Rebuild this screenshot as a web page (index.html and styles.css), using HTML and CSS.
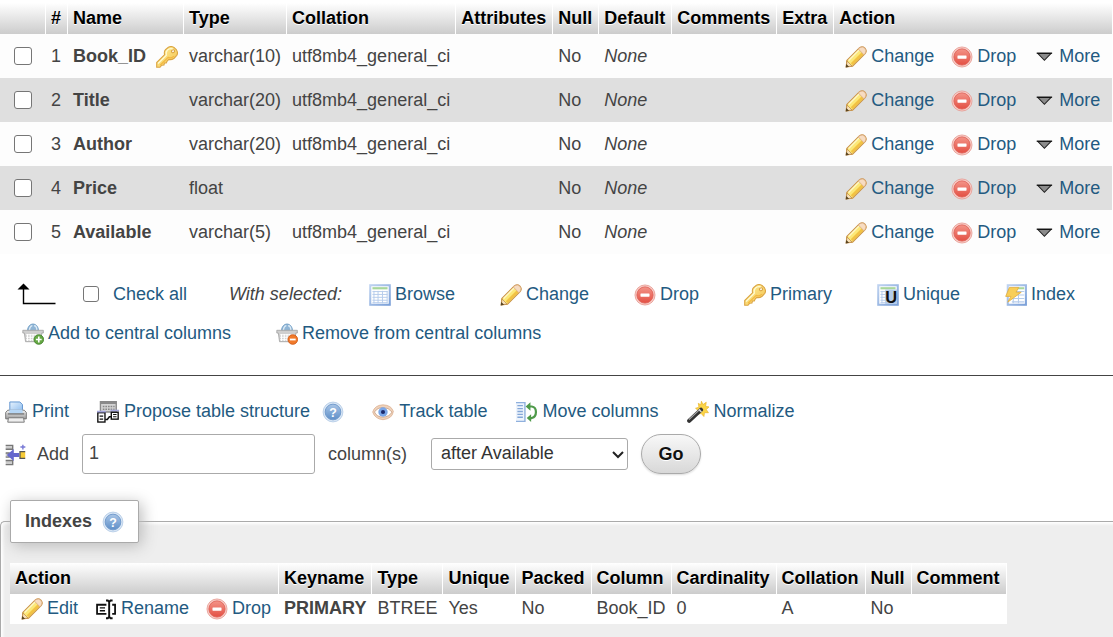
FILE: index.html
```
<!DOCTYPE html>
<html lang="en">
<head>
<meta charset="utf-8">
<title>Table structure</title>
<link rel="stylesheet" href="styles.css">
</head>
<body>
<svg class="sprite" width="0" height="0" aria-hidden="true">
  <defs>
    <linearGradient id="g-gold" x1="0" y1="0" x2="1" y2="1"><stop offset="0" stop-color="#fff3a0"/><stop offset="1" stop-color="#f3bf4a"/></linearGradient>
    <linearGradient id="g-red" x1="0" y1="0" x2="0" y2="1"><stop offset="0" stop-color="#f39488"/><stop offset="1" stop-color="#e34f43"/></linearGradient>
    <linearGradient id="g-blue" x1="0" y1="0" x2="0" y2="1"><stop offset="0" stop-color="#a9c5e6"/><stop offset="1" stop-color="#5f8fc8"/></linearGradient>
    <linearGradient id="g-paper" x1="0" y1="0" x2="1" y2="1"><stop offset="0" stop-color="#e6f2fd"/><stop offset="1" stop-color="#8cbcee"/></linearGradient>
    <linearGradient id="g-grey" x1="0" y1="0" x2="0" y2="1"><stop offset="0" stop-color="#f4f4f4"/><stop offset="1" stop-color="#9a9a9a"/></linearGradient>
    <linearGradient id="g-frame" x1="0" y1="0" x2="1" y2="1"><stop offset="0" stop-color="#bfd3f0"/><stop offset="1" stop-color="#7ba0d8"/></linearGradient>
  </defs>
  <symbol id="pencil" viewBox="0 0 16 16">
    <path d="M.9 15.2 1.3 10.6 10.6 1.3Q12.6-.1 14.5 1.5 16.2 3.5 14.8 5.4L5.5 14.7Z" fill="#fce878" stroke="#c9924a" stroke-width=".8"/>
    <path d="M4.900 13.2 13.6 4.5" stroke="#f2c243" stroke-width="2"/>
    <path d="M2.600 10.5 10.7 2.4" stroke="#fff8c4" stroke-width="1.1"/>
    <path d="M9.700 2.200 10.8 1.2Q12.7.1 14.4 1.600 15.900 3.400 14.7 5.300L13.7 6.300Z" fill="#f7dcc2" stroke="#dcae84" stroke-width=".6"/>
    <path d="M.9 15.2 1.500 11 5.1 14.500Z" fill="#f8e2ba" stroke="#b98642" stroke-width=".5"/>
    <path d="M.5 15.6 .9 13 3 15.1Z" fill="#5a4522"/>
  </symbol>
  <symbol id="drop" viewBox="0 0 16 16">
    <circle cx="8" cy="8" r="7.3" fill="#f8cdc7" stroke="#e79a92" stroke-width=".6"/>
    <circle cx="8" cy="8" r="5.9" fill="url(#g-red)" stroke="#de5f55" stroke-width=".6"/>
    <rect x="4.7" y="6.9" width="6.6" height="2.3" rx=".4" fill="#fff"/>
  </symbol>
  <symbol id="more" viewBox="0 0 16 16">
    <path d="M3.6 5.5H13L8.3 10.4Z" fill="#8b8b8b" stroke="#222" stroke-width=".8"/>
    <path d="M2.7 5.2H13.9" stroke="#111" stroke-width=".9"/>
  </symbol>
  <symbol id="key" viewBox="0 0 16 16">
    <path fill-rule="evenodd" d="M9 .9Q11.4-.3 13.4 1.3L14.8 2.7Q16.3 4.900 15.1 6.8L13.2 8.9Q11.300 10.3 9.300 9.800L8.100 11 7.500 12.3 6.100 12.4 5.8 13.8 4.2 14 2.9 15.5H.5V12L6.3 6.300Q5.600 4.100 6.900 2.700ZM11.7 3.1A1 1 0 1 0 13.1 4.5 1 1 0 1 0 11.7 3.1Z" fill="url(#g-gold)" stroke="#dba544" stroke-width=".8"/>
    <path d="M1.500 12.700 7.500 6.700Q7 4.200 8.300 2.900 10 1.300 12.200 2.100" fill="none" stroke="#fffbd2" stroke-width=".9"/>
    <path d="M3 14 8.800 8.300Q11 9.300 13 7.400" fill="none" stroke="#f3b840" stroke-width=".9"/>
  </symbol>
  <symbol id="grid" viewBox="0 0 16 16">
    <rect x=".9" y=".9" width="14.2" height="14.2" fill="#fff" stroke="url(#g-frame)" stroke-width="1.5"/>
    <path d="M2.5 3.1H13.5" stroke="#a7d69b" stroke-width="1.6"/>
    <path d="M2.5 5.5H13.5M2.5 7.6H13.5M2.5 9.7H13.5M2.5 11.8H13.5M2.5 13.6H13.5M3.6 5V14M6.6 5V14M9.8 5V14M13.2 5V14" stroke="#b6cceb" stroke-width=".7"/>
  </symbol>
  <symbol id="index" viewBox="0 0 16 16">
    <rect x="2" y=".9" width="13.2" height="14.2" fill="#fff" stroke="url(#g-frame)" stroke-width="1.5"/>
    <path d="M9 3.1H14" stroke="#a7d69b" stroke-width="1.5"/>
    <path d="M8 5.5H14M8 8H14M5 10.5H14M5 13H14M9.8 5V14M6 10V14" stroke="#b6cceb" stroke-width=".8"/>
    <path d="M3.2 2.5H10L8 6H11.8L2 13.2 4.3 9H.5Z" fill="#f8ce58" stroke="#e1ac3e" stroke-width=".6"/>
  </symbol>
  <symbol id="basket" viewBox="0 0 16 16">
    <path d="M4 5.5A4 4.8 0 0 1 12 5.500Z" fill="#8fb5d6" stroke="#6999c2" stroke-width=".6"/>
    <path d="M5.4 5.5A2 3.5 0 0 1 7.500 2M8.800 2A2 3.5 0 0 1 10.8 5.500" fill="none" stroke="#dceaf5"/>
    <path d="M.6 5.3H15.5V7.3H14.4L13.7 13.6H2.6L1.7 7.3H.6Z" fill="#cfcfcf" stroke="#a2a2a2" stroke-width=".6"/>
    <path d="M3 8.5H13.5M3 10.4H13.4M3 12.2H13M4 8V13M6 8V13M8 8V13M10 8V13M12 8V13" stroke="#fff" stroke-width=".8"/>
  </symbol>
  <symbol id="basket-add" viewBox="0 0 16 16">
    <use href="#basket" width="16" height="16"/>
    <circle cx="12.2" cy="12" r="3.5" fill="#65a843" stroke="#3e7d28" stroke-width=".6"/>
    <path d="M12.2 9.900V14.1M10.1 12H14.300" stroke="#fff" stroke-width="1.2"/>
  </symbol>
  <symbol id="basket-remove" viewBox="0 0 16 16">
    <use href="#basket" width="16" height="16"/>
    <circle cx="12.2" cy="12" r="3.5" fill="#f17a2a" stroke="#cc5411" stroke-width=".6"/>
    <path d="M10.1 12H14.300" stroke="#fff" stroke-width="1.3"/>
  </symbol>
  <symbol id="print" viewBox="0 0 16 16">
    <path d="M3.5 8V.7H10.8L12.7 2.6V8Z" fill="url(#g-paper)" stroke="#5f93cf" stroke-width=".7"/>
    <path d="M2 6.7H14L15.5 8.3V13H.5V8.3Z" fill="url(#g-grey)" stroke="#777" stroke-width=".7"/>
    <path d="M3.2 6.2H12.8V9H3.2Z" fill="#b5d6f5"/>
    <path d="M2 9.4H14" stroke="#555" stroke-width=".7"/>
    <path d="M2.5 12.2H13.5L14 15.4H2Z" fill="#eee" stroke="#777" stroke-width=".7"/>
  </symbol>
  <symbol id="propose" viewBox="0 0 16 16">
    <path d="M2.5.5H14V8H2.5Z" fill="#d4d4d4" stroke="#8a8a8a"/>
    <path d="M2.5 1.3H14" stroke="#8a8a8a" stroke-width="1.8"/>
    <path d="M4.2 4H12.8M4.2 6H12.8" stroke="#888" stroke-dasharray="1.2 .7"/>
    <rect x=".6" y="8.500" width="5.2" height="6.8" fill="#fff" stroke="#111"/>
    <path d="M0 7.700H6.400M9.800 7H16" stroke="#a5a6dc" stroke-width="1.4"/>
    <rect x="10.4" y="8.200" width="5" height="5" fill="#fff" stroke="#111"/>
    <path d="M1.900 11H4.500M1.900 13.2H4.500M11.700 9.800H14.2M11.700 11.500H14.2" stroke="#111" stroke-width=".8"/>
    <path d="M6 13.500H7.500L9 11.500H10.400" fill="none" stroke="#111" stroke-width="1.1"/>
  </symbol>
  <symbol id="help" viewBox="0 0 16 16">
    <circle cx="8" cy="8" r="7.2" fill="#d9e6f5" stroke="#b9cfe8" stroke-width=".7"/>
    <circle cx="8" cy="8" r="5.7" fill="url(#g-blue)" stroke="#6f99cb" stroke-width=".7"/>
  </symbol>
  <symbol id="eye" viewBox="0 0 16 16">
    <path d="M.5 8Q2 3 8 2.8 14 3 15.5 7.500 15 12.8 8 13.600 2 13 .5 8Z" fill="#efd2bb" stroke="#ddb294" stroke-width=".6"/>
    <path d="M1.800 8Q4 4.700 8 4.700T14.600 8Q12.500 11.600 8 11.700T1.800 8Z" fill="#fff" stroke="#c9a287" stroke-width=".6"/>
    <circle cx="8" cy="8" r="3.400" fill="#7aa6e8"/><circle cx="8" cy="8" r="1.500" fill="#1b2a6c"/>
  </symbol>
  <symbol id="move" viewBox="0 0 16 16">
    <path d="M0 1.2H6.5V14.8H0" fill="#eef4fc" stroke="#8fb0dd"/>
    <path d="M1 3.4H5M1 5.5H5M1 7.6H5M1 9.7H5M1 11.8H5" stroke="#84a7d8"/>
    <path d="M9 4H11.5Q14.5 4.4 14.5 8T11.5 12.4H10.5" fill="none" stroke="#4f9a4a" stroke-width="1.6"/>
    <path d="M7 4 10.5.9V7ZM7.8 12.4 11 9.7V15.2Z" fill="#4f9a4a"/>
  </symbol>
  <symbol id="wand" viewBox="0 0 16 16">
    <path d="M10.5.2 11.6 2.6 14 .9 13.5 3.8 16 4.3 14 6.2 15.6 8.5 12.7 8.5 12.3 11.3 10.3 9.1 7.8 9.5 8.3 7 6.2 5.3 8.7 4.5 8.2 1.7 10 2.8Z" fill="#fbd548" stroke="#e9b52b" stroke-width=".5"/>
    <path d="M1.6 14.4 10.2 6.4" stroke="#333" stroke-width="3" stroke-linecap="round"/>
    <path d="M1.4 13.5 9.5 5.9" stroke="#aaa" stroke-width=".8"/>
    <path d="M8.7 6.2 10.5 8" stroke="#ddd"/>
  </symbol>
  <symbol id="add-column" viewBox="0 0 16 16">
    <path d="M.5 1H5.600V3.800H.5M.5 12H5.600V15H.5M.5 6.500H3V9.500H.5" fill="#ccc" stroke="#777" stroke-width="1"/>
    <path d="M1.300 8 6.400 3.700V6.500H10.300V9.500H6.400V12.300Z" fill="#6668cd"/>
    <path d="M14.7 5.600H10.900V10.400H14.700Z" fill="#f7cb36"/>
    <path d="M14.700 5.600H10.900V10.400H14.700" fill="none" stroke="#555" stroke-width=".9"/>
    <path d="M13 .5V4M11.200 2.200H14.800" stroke="#7778d5" stroke-width="1"/>
  </symbol>
  <symbol id="rename" viewBox="0 0 16 16">
    <path d="M8.300 4.900H1.500V11.600H8.300M12.500 4.900H14.600V11.600H12.500" fill="none" stroke="#111" stroke-width="1.300"/>
    <path d="M3.500 7.200H7.300M3.500 9.300H7.300" stroke="#111"/>
    <path d="M8 1.800H9.300L10.300 2.800 11.300 1.800H12.800M10.300 2.800V13.700M8 14.700H9.300L10.300 13.700 11.300 14.700H12.800" fill="none" stroke="#111" stroke-width="1.400"/>
  </symbol>
</svg>

<main class="page">
  <form class="structure">
    <table class="data columns">
      <thead>
        <tr><th></th><th>#</th><th>Name</th><th>Type</th><th>Collation</th><th>Attributes</th><th>Null</th><th>Default</th><th>Comments</th><th>Extra</th><th class="wide">Action</th></tr>
      </thead>
      <tbody>
        <tr>
          <td class="tick"><input type="checkbox" class="check" aria-label="Select Book_ID"></td><td>1</td>
          <th scope="row"><span class="name">Book_ID <svg class="icon"><use href="#key"/></svg></span></th>
          <td>varchar(10)</td><td>utf8mb4_general_ci</td><td></td><td>No</td><td><i>None</i></td><td></td><td></td>
          <td><div class="actions"><a class="link" href="#"><svg class="icon"><use href="#pencil"/></svg>Change</a><a class="link" href="#"><svg class="icon"><use href="#drop"/></svg>Drop</a><a class="link" href="#"><svg class="icon"><use href="#more"/></svg>More</a></div></td>
        </tr>
        <tr>
          <td class="tick"><input type="checkbox" class="check" aria-label="Select Title"></td><td>2</td>
          <th scope="row">Title</th>
          <td>varchar(20)</td><td>utf8mb4_general_ci</td><td></td><td>No</td><td><i>None</i></td><td></td><td></td>
          <td><div class="actions"><a class="link" href="#"><svg class="icon"><use href="#pencil"/></svg>Change</a><a class="link" href="#"><svg class="icon"><use href="#drop"/></svg>Drop</a><a class="link" href="#"><svg class="icon"><use href="#more"/></svg>More</a></div></td>
        </tr>
        <tr>
          <td class="tick"><input type="checkbox" class="check" aria-label="Select Author"></td><td>3</td>
          <th scope="row">Author</th>
          <td>varchar(20)</td><td>utf8mb4_general_ci</td><td></td><td>No</td><td><i>None</i></td><td></td><td></td>
          <td><div class="actions"><a class="link" href="#"><svg class="icon"><use href="#pencil"/></svg>Change</a><a class="link" href="#"><svg class="icon"><use href="#drop"/></svg>Drop</a><a class="link" href="#"><svg class="icon"><use href="#more"/></svg>More</a></div></td>
        </tr>
        <tr>
          <td class="tick"><input type="checkbox" class="check" aria-label="Select Price"></td><td>4</td>
          <th scope="row">Price</th>
          <td>float</td><td></td><td></td><td>No</td><td><i>None</i></td><td></td><td></td>
          <td><div class="actions"><a class="link" href="#"><svg class="icon"><use href="#pencil"/></svg>Change</a><a class="link" href="#"><svg class="icon"><use href="#drop"/></svg>Drop</a><a class="link" href="#"><svg class="icon"><use href="#more"/></svg>More</a></div></td>
        </tr>
        <tr>
          <td class="tick"><input type="checkbox" class="check" aria-label="Select Available"></td><td>5</td>
          <th scope="row">Available</th>
          <td>varchar(5)</td><td>utf8mb4_general_ci</td><td></td><td>No</td><td><i>None</i></td><td></td><td></td>
          <td><div class="actions"><a class="link" href="#"><svg class="icon"><use href="#pencil"/></svg>Change</a><a class="link" href="#"><svg class="icon"><use href="#drop"/></svg>Drop</a><a class="link" href="#"><svg class="icon"><use href="#more"/></svg>More</a></div></td>
        </tr>
      </tbody>
    </table>

    <div class="bulk">
      <div class="bulk-row">
        <div class="select-all">
          <svg class="elbow" viewBox="0 0 40 22"><path d="M6.5 4V20.5H38.5" fill="none" stroke="#000" stroke-width="1.4"/><path d="M6.5 .5 12.5 6.5H.5Z"/></svg>
          <input type="checkbox" class="check small" id="check-all"><label class="check-label" for="check-all">Check all</label>
          <i>With selected:</i>
        </div>
        <button type="button" class="link"><svg class="icon"><use href="#grid"/></svg>Browse</button>
        <button type="button" class="link"><svg class="icon"><use href="#pencil"/></svg>Change</button>
        <button type="button" class="link"><svg class="icon"><use href="#drop"/></svg>Drop</button>
        <button type="button" class="link"><svg class="icon"><use href="#key"/></svg>Primary</button>
        <button type="button" class="link"><svg class="icon" viewBox="0 0 16 16"><use href="#grid" width="16" height="16"/><rect x="6" y="4" width="8.5" height="10.5" fill="#b5cbe8"/><text x="6" y="13.6" class="letter-u">U</text></svg>Unique</button>
        <button type="button" class="link"><svg class="icon"><use href="#index"/></svg>Index</button>
      </div>
      <div class="bulk-row second">
        <button type="button" class="link"><svg class="icon"><use href="#basket-add"/></svg>Add to central columns</button>
        <button type="button" class="link"><svg class="icon"><use href="#basket-remove"/></svg>Remove from central columns</button>
      </div>
    </div>
  </form>

  <hr class="rule">

  <nav class="tools">
    <a class="link" href="#"><svg class="icon"><use href="#print"/></svg>Print</a>
    <span class="with-help"><a class="link" href="#"><svg class="icon"><use href="#propose"/></svg>Propose table structure</a><a class="link" href="#" aria-label="Documentation"><svg class="icon" viewBox="0 0 16 16"><use href="#help" width="16" height="16"/><text x="8" y="11.3" text-anchor="middle" class="letter-q">?</text></svg></a></span>
    <a class="link" href="#"><svg class="icon"><use href="#eye"/></svg>Track table</a>
    <a class="link" href="#"><svg class="icon"><use href="#move"/></svg>Move columns</a>
    <a class="link" href="#"><svg class="icon"><use href="#wand"/></svg>Normalize</a>
  </nav>

  <form class="add-form">
    <svg class="icon"><use href="#add-column"/></svg>
    <label class="add-label" for="add-count">Add</label>
    <input class="count" id="add-count" type="text" value="1">
    <label class="count-label" for="add-where">column(s)</label>
    <span class="select-wrap">
      <select class="where" id="add-where"><option>after Available</option></select>
      <svg class="chevron" viewBox="0 0 14 10"><path d="M2 2 7 7 12 2" fill="none" stroke="#222" stroke-width="2"/></svg>
    </span>
    <button class="go" type="button">Go</button>
  </form>

  <fieldset class="indexes">
    <legend class="legend"><span class="with-help">Indexes <a class="link" href="#" aria-label="Index documentation"><svg class="icon" viewBox="0 0 16 16"><use href="#help" width="16" height="16"/><text x="8" y="11.3" text-anchor="middle" class="letter-q">?</text></svg></a></span></legend>
    <table class="data keys">
      <thead>
        <tr><th>Action</th><th>Keyname</th><th>Type</th><th>Unique</th><th>Packed</th><th>Column</th><th>Cardinality</th><th>Collation</th><th>Null</th><th>Comment</th></tr>
      </thead>
      <tbody>
        <tr>
          <td><div class="actions"><a class="link" href="#"><svg class="icon"><use href="#pencil"/></svg>Edit</a><a class="link" href="#"><svg class="icon"><use href="#rename"/></svg>Rename</a><a class="link" href="#"><svg class="icon"><use href="#drop"/></svg>Drop</a></div></td>
          <th scope="row">PRIMARY</th><td>BTREE</td><td>Yes</td><td>No</td><td>Book_ID</td><td>0</td><td>A</td><td>No</td><td></td>
        </tr>
      </tbody>
    </table>
  </fieldset>
</main>
</body>
</html>
```
FILE: styles.css
```
* { box-sizing: border-box; }

body {
  margin: 0;
  background: #fff;
  color: #444;
  font: 18px/22px "Liberation Sans", Arial, sans-serif;
}

button, input, select { font: inherit; color: inherit; }

.sprite { position: absolute; }
.letter-u { font: bold 12px "Liberation Sans", Arial, sans-serif; fill: #111; }
.letter-q { font: bold 9px "Liberation Sans", Arial, sans-serif; fill: #fff; }

.page {
  display: flex;
  flex-direction: column;
  min-height: 100vh;
}

.icon {
  display: block;
  flex: none;
  width: 22px;
  height: 22px;
  margin-top: 2px;
}

.link {
  display: flex;
  align-items: center;
  gap: 4px;
  padding: 0;
  border: 0;
  background: none;
  color: #235a81;
  text-decoration: none;
  white-space: nowrap;
  cursor: pointer;
}

.link:hover { text-decoration: underline; }

/* Data tables */
.data {
  border-collapse: separate;
  border-spacing: 0;
  white-space: nowrap;
}

.data th, .data td {
  padding: 0 5px;
  border-right: 1px solid transparent;
  text-align: left;
}

.data thead th {
  height: 31px;
  padding: 0 6px 2px 5px;
  border-right-color: #fff;
  background: linear-gradient(#fff, #ccc) padding-box;
  color: #000;
  text-shadow: 0 1px 0 #fff;
}

.structure { padding: 3px 1px 0 0; }
.columns { width: 100%; }
.columns tbody tr { height: 44px; background: #fdfdfd; }
.columns tbody tr:nth-child(even) { background: #dfdfdf; }
.columns .wide { width: 100%; border-right: 0; }
.columns .tick { padding: 0 13px 0 14px; }

.keys { background: #fff; }
.keys tbody tr { height: 30px; }
.keys tbody td, .keys tbody th { padding-bottom: 2px; }

.name { display: flex; align-items: center; gap: 10px; }
.actions { display: flex; gap: 17px; padding: 0 2px 0 6px; }

.check {
  display: block;
  appearance: none;
  width: 18px;
  height: 18px;
  margin: 0;
  border: 1px solid #767676;
  border-radius: 3px;
  background: #fff;
}

.check:checked { background: #235a81; }
.small { width: 16px; height: 16px; }

/* Bulk actions */
.bulk { padding-top: 20px; }

.bulk-row {
  display: flex;
  align-items: center;
  column-gap: 45px;
  min-height: 39px;
  padding-left: 17px;
}

.second { padding-left: 22px; }

.select-all {
  display: flex;
  align-items: center;
  margin-right: -18px;
  white-space: nowrap;
}

.elbow { width: 40px; height: 22px; margin-right: 26px; }
.check-label { margin: 0 42px 0 14px; color: #235a81; }

.rule {
  width: 100%;
  height: 1px;
  margin: 23px 0 15px;
  border: 0;
  background: #444;
}

/* Table tools */
.tools {
  display: flex;
  align-items: center;
  gap: 28px;
  min-height: 40px;
  padding-left: 5px;
}

.tools .link { gap: 5px; }
.with-help { display: flex; align-items: center; gap: 12px; }

.add-form {
  display: flex;
  align-items: center;
  margin: 3px 0 26px;
  padding-left: 5px;
}

.add-label { margin: 0 13px 0 10px; }

.count {
  width: 233px;
  height: 40px;
  padding: 0 6px 2px;
  border: 1px solid #aaa;
  border-radius: 3px;
}

.count-label { margin: 0 24px 0 13px; }

.select-wrap { position: relative; }

.where {
  display: block;
  appearance: none;
  width: 197px;
  height: 32px;
  padding: 0 9px 2px;
  border: 1px solid #aaa;
  border-radius: 3px;
  background: #fff;
  color: #333;
}

.chevron {
  position: absolute;
  top: 12px;
  right: 3px;
  width: 14px;
  height: 10px;
  pointer-events: none;
}

.go {
  width: 60px;
  height: 40px;
  margin-left: 13px;
  padding: 0;
  border: 1px solid #aaa;
  border-radius: 20px;
  background: linear-gradient(#f8f8f8, #d8d8d8);
  box-shadow: 0 1px 2px #ddd;
  color: #111;
  font-weight: bold;
  text-shadow: 0 1px 0 #fff;
}

/* Indexes */
.indexes {
  flex: 1;
  min-width: 0;
  margin: 0;
  padding: 20px 9px 13px;
  border: 1px solid #aaa;
  border-width: 1px 0 0 1px;
  border-radius: 5px 0 0 0;
  background: #eee;
  box-shadow: inset 2px 2px 3px #fff;
}

.legend {
  padding: 8px 14px 9px;
  border: 1px solid #aaa;
  border-radius: 2px;
  background: #fff;
  box-shadow: 3px 3px 15px #bbb;
  font-weight: bold;
}

.legend .with-help { gap: 10px; }
```
